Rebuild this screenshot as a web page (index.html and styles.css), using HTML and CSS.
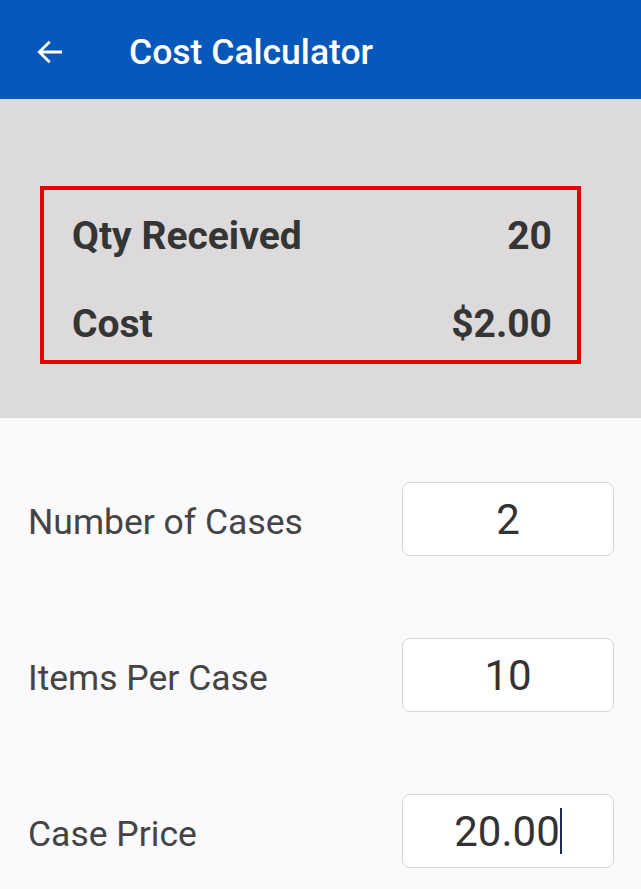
FILE: index.html
```html
<!DOCTYPE html>
<html lang="en">
<head>
    <meta charset="UTF-8">
    <meta name="viewport" content="width=device-width, initial-scale=1.0">
    <title>Cost Calculator</title>
    <link rel="stylesheet" href="styles.css">
</head>
<body>
    <header class="app-bar">
        <span class="back">
            <svg width="32" height="32" viewBox="0 0 24 24">
                <path d="M20 12H5M11 5l-7 7 7 7" fill="none" stroke="#fff" stroke-width="2.1" stroke-linecap="square"/>
            </svg>
        </span>
        <h1>Cost Calculator</h1>
    </header>

    <section class="summary">
        <div class="summary-box">
            <div class="summary-row">
                <span>Qty Received</span>
                <span>20</span>
            </div>
            <div class="summary-row">
                <span>Cost</span>
                <span>$2.00</span>
            </div>
        </div>
    </section>

    <section class="form">
        <div class="field">
            <label>Number of Cases</label>
            <div class="input">2</div>
        </div>
        <div class="field">
            <label>Items Per Case</label>
            <div class="input">10</div>
        </div>
        <div class="field">
            <label>Case Price</label>
            <div class="input">20.00<span class="caret"></span></div>
        </div>
    </section>
</body>
</html>
```

FILE: styles.css
```css
:root {
    --primary-color: #0758ba;
    --text-dark: #353535;
}

body {
    margin: 0;
    font-family: Roboto, 'Liberation Sans', sans-serif;
    background-color: #fafafc;
}

.app-bar {
    height: 99px;
    box-sizing: border-box;
    padding: 4px 0 0 34px;
    background-color: var(--primary-color);
    display: flex;
    align-items: center;
    color: white;
}

.back {
    display: flex;
    width: 95px;
}

.app-bar h1 {
    margin: 0;
    font-size: 35.5px;
    font-weight: 500;
}

.summary {
    background-color: #dcdadb;
    padding: 87px 60px 54px 40px;
}

.summary-box {
    border: 4px solid #e60000;
    padding: 24px 25px 14px 28px;
    display: flex;
    flex-direction: column;
    gap: 44px;
}

.summary-row {
    display: flex;
    justify-content: space-between;
    align-items: center;
    height: 44px;
    font-size: 39px;
    font-weight: bold;
    color: var(--text-dark);
}

.form {
    padding: 64px 27px 0 28px;
}

.field {
    display: flex;
    justify-content: space-between;
    align-items: center;
    height: 74px;
    margin-bottom: 82px;
}

.field label {
    font-size: 35.5px;
    color: #444;
    padding-top: 5px;
}

.input {
    width: 210px;
    height: 72px;
    border: 1px solid #d8d8d8;
    border-radius: 8px;
    background-color: white;
    display: flex;
    align-items: center;
    justify-content: center;
    font-size: 42px;
    color: #333;
}

.caret {
    width: 2px;
    height: 46px;
    background-color: #1c2c5c;
}
```
